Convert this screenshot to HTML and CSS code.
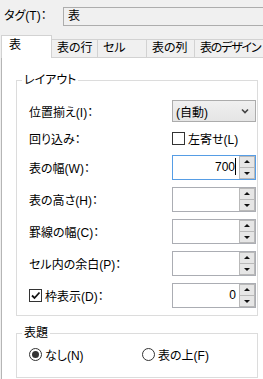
FILE: index.html
```html
<!DOCTYPE html>
<html lang="ja">
<head>
    <meta charset="UTF-8">
    <title>表のプロパティ</title>
    <link rel="stylesheet" href="styles.css">
</head>
<body>
<div class="dialog">
    <!-- タグ -->
    <div class="tag-row">
        <span class="tag-label">タグ(T)：</span>
        <div class="tag-box">表</div>
    </div>

    <!-- タブ -->
    <div class="tabs">
        <div class="tab now">表</div>
        <div class="tab t-row">表の行</div>
        <div class="tab t-cell">セル</div>
        <div class="tab t-col">表の列</div>
        <div class="tab t-design">表のデザイン</div>
    </div>

    <div class="panel">
        <fieldset class="group group-layout">
            <legend>レイアウト</legend>
            <div class="form-grid">
                <span class="lbl">位置揃え(I)：</span>
                <div class="select">
                    <span>(自動)</span>
                    <svg width="8" height="6" viewBox="0 0 8 6"><path d="M1 1.5 L4 4.5 L7 1.5" fill="none" stroke="#444" stroke-width="1.6"/></svg>
                </div>

                <span class="lbl">回り込み：</span>
                <label class="check"><span class="box"></span>左寄せ(L)</label>

                <span class="lbl">表の幅(W)：</span>
                <div class="spin focus">
                    <span class="val">700<i class="caret"></i></span>
                    <span class="btns"><b class="up"></b><b class="down"></b></span>
                </div>

                <span class="lbl">表の高さ(H)：</span>
                <div class="spin">
                    <span class="val"></span>
                    <span class="btns"><b class="up"></b><b class="down"></b></span>
                </div>

                <span class="lbl">罫線の幅(C)：</span>
                <div class="spin">
                    <span class="val"></span>
                    <span class="btns"><b class="up"></b><b class="down"></b></span>
                </div>

                <span class="lbl">セル内の余白(P)：</span>
                <div class="spin">
                    <span class="val"></span>
                    <span class="btns"><b class="up"></b><b class="down"></b></span>
                </div>

                <label class="check">
                    <span class="box">
                        <svg width="11" height="11" viewBox="0 0 11 11"><path d="M2 5.5 L4.5 8 L9.5 2.5" fill="none" stroke="#111" stroke-width="1.8"/></svg>
                    </span>枠表示(D)：
                </label>
                <div class="spin">
                    <span class="val">0</span>
                    <span class="btns"><b class="up"></b><b class="down"></b></span>
                </div>
            </div>
        </fieldset>

        <fieldset class="group group-caption">
            <legend>表題</legend>
            <div class="radios">
                <label class="radio first"><span class="dot on"></span>なし(N)</label>
                <label class="radio"><span class="dot"></span>表の上(F)</label>
            </div>
        </fieldset>
    </div>
</div>
</body>
</html>
```

FILE: styles.css
```css
*{
    margin: 0;
    padding: 0;
    box-sizing: border-box;
}
body{
    font-family: "Liberation Sans", "Noto Sans CJK JP", sans-serif;
    font-size: 12px;
    font-feature-settings: "palt";
    color: #000;
    background: #f0f0f0;
    width: 263px;
    height: 379px;
    overflow: hidden;
}
.dialog{
    width: 320px;
}

/* タグ */
.tag-row{
    display: flex;
    height: 35px;
    padding-top: 7px;
}
.tag-label{
    width: 63px;
    padding-left: 4px;
    line-height: 19px;
}
.tag-box{
    width: 230px;
    height: 19px;
    border: 1px solid #adadad;
    background: #f0f0f0;
    padding-left: 4px;
    line-height: 17px;
}

/* タブ */
.tabs{
    display: flex;
    align-items: flex-end;
    height: 22px;
    margin-left: 1px;
    position: relative;
    z-index: 1;
}
.tab{
    height: 18px;
    border: 1px solid #d2d2d2;
    border-bottom: none;
    margin-left: -1px;
    padding-left: 5px;
    line-height: 16px;
    white-space: nowrap;
    background: #f0f0f0;
}
.tab.now{
    margin-left: 0;
    width: 51px;
    height: 23px;
    margin-bottom: -1px;
    background: #fff;
    padding-left: 7px;
    padding-top: 1px;
    position: relative;
    z-index: 2;
}
.t-row{ width: 47px; }
.t-cell{ width: 50px; }
.t-col{ width: 49px; }
.t-design{
    width: 90px;
    letter-spacing: -1.2px;
}

.panel{
    margin-left: 1px;
    height: 330px;
    background: #fff;
    border-top: 1px solid #d2d2d2;
    border-left: 1px solid #b5b5b5;
    padding: 14px 0 0 14px;
}

/* グループ */
.group{
    width: 242px;
    border: 1px solid #dcdcdc;
    padding: 12px 0 7px 12px;
}
.group legend{
    margin-left: -7px;
    padding: 0 2px;
    line-height: 16px;
}
.group-caption{
    margin-top: 9px;
    padding: 5px 0 15px 12px;
}

.form-grid{
    display: grid;
    grid-template-columns: 143px 84px;
    grid-template-rows: 22px 19px 25px 25px 25px 25px 25px;
    row-gap: 7px;
    align-items: center;
}

/* セレクト */
.select{
    height: 22px;
    border: 1px solid #acacac;
    background: linear-gradient(#f0f0f0, #e5e5e5);
    display: flex;
    align-items: center;
    justify-content: space-between;
    padding: 0 6px 0 3px;
}

/* チェック */
.check{
    display: flex;
    align-items: center;
}
.box{
    width: 13px;
    height: 13px;
    border: 1px solid #333;
    background: #fff;
    margin-right: 3px;
    display: flex;
    align-items: center;
    justify-content: center;
}

/* スピン */
.spin{
    height: 25px;
    border: 1px solid #abadb3;
    background: #fff;
    display: flex;
}
.spin.focus{
    border-color: #569de5;
}
.val{
    flex: 1;
    text-align: right;
    padding-right: 3px;
    line-height: 23px;
}
.caret{
    display: inline-block;
    width: 1px;
    height: 17px;
    background: #000;
    vertical-align: -4px;
}
.btns{
    width: 16px;
    display: flex;
    flex-direction: column;
}
.btns b{
    flex: 1;
    border: 1px solid #b9b9b9;
    background: #e6e6e6;
    position: relative;
}
.btns b + b{
    border-top: none;
}
.btns b::after{
    content: "";
    position: absolute;
    left: 4px;
    top: 3px;
    border-left: 3px solid transparent;
    border-right: 3px solid transparent;
}
.btns .up::after{
    border-bottom: 3px solid #111;
}
.btns .down::after{
    border-top: 3px solid #111;
    top: 4px;
}

/* ラジオ */
.radios{
    display: flex;
    height: 16px;
}
.radio{
    display: flex;
    align-items: center;
}
.radio.first{
    width: 113px;
}
.dot{
    width: 13px;
    height: 13px;
    border: 1px solid #333;
    border-radius: 50%;
    margin-right: 3px;
    background: #fff;
    position: relative;
}
.dot.on::after{
    content: "";
    position: absolute;
    left: 2px;
    top: 2px;
    width: 7px;
    height: 7px;
    border-radius: 50%;
    background: #333;
}
```
